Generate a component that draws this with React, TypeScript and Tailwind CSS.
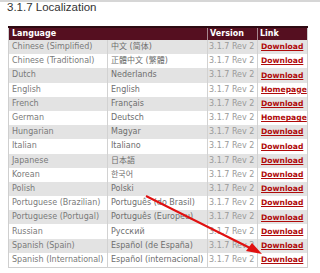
const rows: [string, string, string][] = [
  ['Chinese (Simplified)', '中文 (简体)', 'Download'],
  ['Chinese (Traditional)', '正體中文 (繁體)', 'Download'],
  ['Dutch', 'Nederlands', 'Download'],
  ['English', 'English', 'Homepage'],
  ['French', 'Français', 'Download'],
  ['German', 'Deutsch', 'Homepage'],
  ['Hungarian', 'Magyar', 'Download'],
  ['Italian', 'Italiano', 'Download'],
  ['Japanese', '日本語', 'Download'],
  ['Korean', '한국어', 'Download'],
  ['Polish', 'Polski', 'Download'],
  ['Portuguese (Brazilian)', 'Português (do Brasil)', 'Download'],
  ['Portuguese (Portugal)', 'Português (Europeu)', 'Download'],
  ['Russian', 'Русский', 'Download'],
  ['Spanish (Spain)', 'Español (de España)', 'Download'],
  ['Spanish (International)', 'Español (internacional)', 'Download'],
];

const headCell =
  'h-[13px] text-left text-[8px] font-bold text-white leading-none bg-[#550f20] border-t-2 border-t-[#2e0a12]';

const App = () => {
  return (
    <div className="relative w-[320px] h-[273px] bg-white overflow-hidden">
      <div className="h-[2px] bg-[#d6d6d6]"></div>
      <h2
        className="pl-[7px] text-[11.5px] leading-[11px] text-[#333]"
        style={{ fontFamily: '"Liberation Sans", Arial, sans-serif' }}
      >
        3.1.7 Localization
      </h2>

      <table
        className="mt-[13px] ml-[8px] w-[299px] border-collapse table-fixed border border-[#cfcfcf]"
        style={{ fontFamily: '"DejaVu Sans", Verdana, "Noto Sans CJK SC", sans-serif' }}
      >
        <colgroup>
          <col className="w-[99px]" />
          <col className="w-[100px]" />
          <col className="w-[50px]" />
          <col className="w-[50px]" />
        </colgroup>
        <thead>
          <tr>
            <th colSpan={2} className={`${headCell} pl-[3px] border-r border-r-[#a88890]`}>
              Language
            </th>
            <th className={`${headCell} pl-[2px] border-r border-r-[#a88890]`}>Version</th>
            <th className={`${headCell} pl-[2px]`}>Link</th>
          </tr>
        </thead>
        <tbody>
          {rows.map(([lang, native, link], i) => (
            <tr key={lang} className={`h-[14.2px] ${i % 2 === 0 ? 'bg-[#e3e3e3]' : 'bg-white'}`}>
              <td className="pl-[3px] text-[8px] leading-none text-[#7a7a7a] whitespace-nowrap overflow-hidden border-r border-[#d2d2d2]">
                {lang}
              </td>
              <td className="pl-[3px] text-[8px] leading-none text-[#6e6e6e] whitespace-nowrap overflow-hidden border-r border-[#d2d2d2]">
                {native}
              </td>
              <td className="pl-[1px] text-[8px] leading-none text-[#9a9a9a] whitespace-nowrap overflow-hidden border-r border-[#d2d2d2]">
                3.1.7 Rev 2
              </td>
              <td className="pl-[3px] text-[7.6px] leading-none font-bold text-[#b00a0a] underline whitespace-nowrap overflow-hidden">
                {link}
              </td>
            </tr>
          ))}
        </tbody>
      </table>

      {/* red annotation arrow */}
      <svg className="absolute left-0 top-0" width="320" height="273" viewBox="0 0 320 273">
        <line x1="146" y1="196" x2="252" y2="249" stroke="#e01010" strokeWidth="2" />
        <polygon points="262,254 246,251 252,243" fill="#e01010" />
      </svg>
    </div>
  );
};

export default App;
